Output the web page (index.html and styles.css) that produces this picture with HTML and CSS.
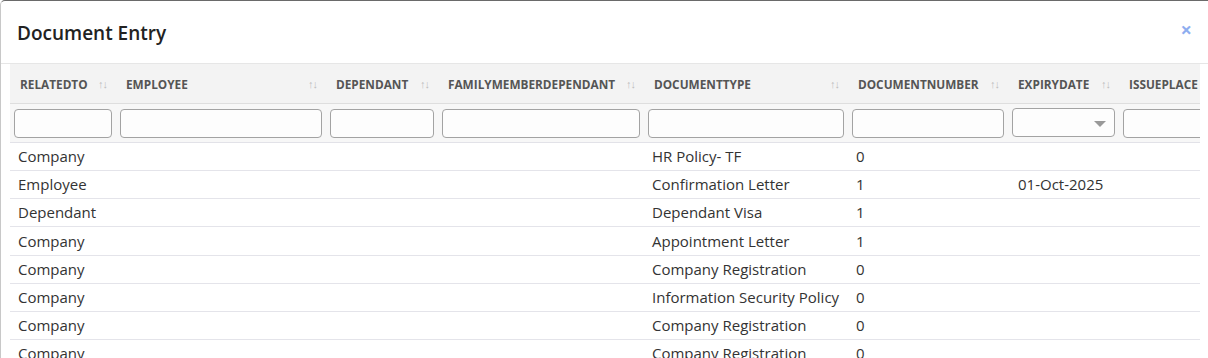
FILE: index.html
```html
<!DOCTYPE html>
<html lang="en">
<head>
    <meta charset="UTF-8">
    <title>Document Entry</title>
    <link rel="stylesheet" href="styles.css">
</head>
<body>
<div class="modal">
    <div class="modal-header">
        <h4 class="modal-title">Document Entry</h4>
        <span class="modal-close">&times;</span>
    </div>
    <div class="modal-body">
        <div class="grid-wrap">
            <table class="grid">
                <colgroup>
                    <col style="width:106px">
                    <col style="width:210px">
                    <col style="width:112px">
                    <col style="width:206px">
                    <col style="width:204px">
                    <col style="width:160px">
                    <col style="width:111px">
                    <col style="width:160px">
                </colgroup>
                <thead>
                <tr class="head-row">
                    <th><span class="label">RelatedTo</span><span class="sort">&uarr;&darr;</span></th>
                    <th><span class="label">Employee</span><span class="sort">&uarr;&darr;</span></th>
                    <th><span class="label">Dependant</span><span class="sort">&uarr;&darr;</span></th>
                    <th><span class="label">FamilyMemberDependant</span><span class="sort">&uarr;&darr;</span></th>
                    <th><span class="label">DocumentType</span><span class="sort">&uarr;&darr;</span></th>
                    <th><span class="label">DocumentNumber</span><span class="sort">&uarr;&darr;</span></th>
                    <th><span class="label">ExpiryDate</span><span class="sort">&uarr;&darr;</span></th>
                    <th class="last"><span class="label">IssuePlace</span></th>
                </tr>
                <tr class="filter-row">
                    <th><input type="text"></th>
                    <th><input type="text"></th>
                    <th><input type="text"></th>
                    <th><input type="text"></th>
                    <th><input type="text"></th>
                    <th><input type="text"></th>
                    <th><div class="select"><span class="caret"></span></div></th>
                    <th><input type="text"></th>
                </tr>
                </thead>
                <tbody>
                <tr><td>Company</td><td></td><td></td><td></td><td>HR Policy- TF</td><td>0</td><td></td><td></td></tr>
                <tr><td>Employee</td><td></td><td></td><td></td><td>Confirmation Letter</td><td>1</td><td class="date">01-Oct-2025</td><td></td></tr>
                <tr><td>Dependant</td><td></td><td></td><td></td><td>Dependant Visa</td><td>1</td><td></td><td></td></tr>
                <tr><td>Company</td><td></td><td></td><td></td><td>Appointment Letter</td><td>1</td><td></td><td></td></tr>
                <tr><td>Company</td><td></td><td></td><td></td><td>Company Registration</td><td>0</td><td></td><td></td></tr>
                <tr><td>Company</td><td></td><td></td><td></td><td>Information Security Policy</td><td>0</td><td></td><td></td></tr>
                <tr><td>Company</td><td></td><td></td><td></td><td>Company Registration</td><td>0</td><td></td><td></td></tr>
                <tr><td>Company</td><td></td><td></td><td></td><td>Company Registration</td><td>0</td><td></td><td></td></tr>
                </tbody>
            </table>
        </div>
    </div>
</div>
</body>
</html>
```
FILE: styles.css
```css
*{
    margin: 0;
    padding: 0;
    box-sizing: border-box;
}
body{
    background: #fff;
    font-family: "Open Sans", "Noto Sans", sans-serif;
    color: #333;
    overflow: hidden;
}
.modal{
    border-top: 1px solid #6a6a6a;
    border-left: 1px solid #c8c8c8;
    border-radius: 5px 0 0 0;
    height: 358px;
}
.modal-header{
    display: flex;
    align-items: center;
    justify-content: space-between;
    height: 63px;
    padding: 0 16px 0 16px;
    border-bottom: 1px solid #e6e6e6;
}
.modal-title{
    font-size: 19px;
    font-weight: 600;
    color: #222;
    margin-top: 2px;
}
.modal-close{
    color: #8eaef0;
    font-size: 20px;
    font-weight: 700;
    line-height: 1;
    margin-top: -4px;
}
.modal-body{
    padding: 0 8px 0 9px;
}
.grid-wrap{
    overflow: hidden;
    width: 1190px;
}
.grid{
    table-layout: fixed;
    border-collapse: separate;
    border-spacing: 0;
    width: 1269px;
    font-size: 15px;
}
.head-row th{
    height: 40px;
    background: #f3f3f3;
    border-bottom: 1px solid #dedede;
    font-size: 11.8px;
    font-weight: 700;
    color: #555;
    text-align: left;
    padding: 0 9px 0 10px;
    white-space: nowrap;
}
.head-row th .label{
    text-transform: uppercase;
}
.head-row .sort{
    float: right;
    color: #bdbdbd;
    font-weight: 400;
    font-size: 11px;
    letter-spacing: -1px;
}
.filter-row th{
    height: 39px;
    background: #f7f7f7;
    border-bottom: 1px solid #e2e2e8;
    padding: 0 4px;
}
.filter-row input,
.filter-row .select{
    display: block;
    width: 100%;
    height: 29px;
    border: 1px solid #a3a3a3;
    border-radius: 4px;
    background: #fdfdfd;
    outline: none;
}
.filter-row .select{
    position: relative;
    margin-top: -2px;
}
.caret{
    position: absolute;
    right: 8px;
    top: 12px;
    border-left: 6px solid transparent;
    border-right: 6px solid transparent;
    border-top: 6px solid #999;
}
.grid td{
    height: 28.17px;
    padding: 0 8px;
    border-bottom: 1px solid #e4e4ea;
    white-space: nowrap;
    color: #333;
    line-height: 19px;
}
.grid td.date{
    padding-left: 10px;
}
```
